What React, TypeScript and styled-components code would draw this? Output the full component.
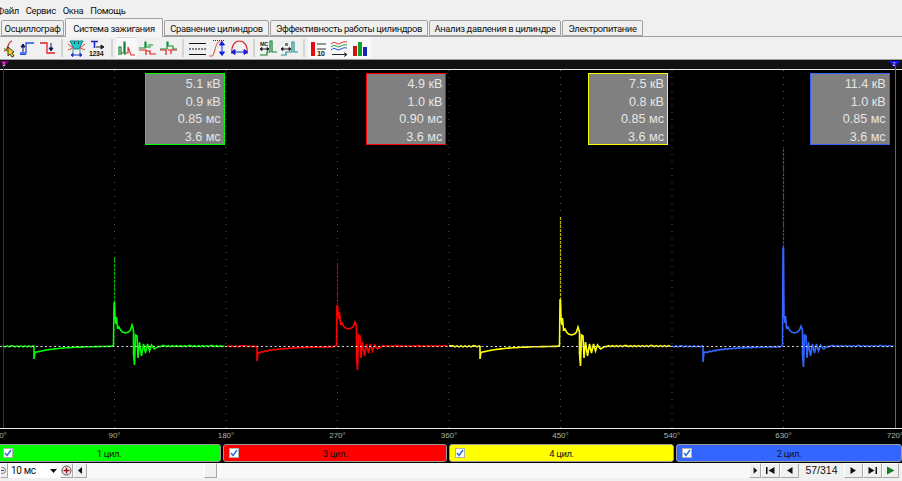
import React from 'react';
import styled, { createGlobalStyle } from 'styled-components';

const GlobalStyle = createGlobalStyle`
  html, body {
    margin: 0;
    padding: 0;
    background: #f0f0f0;
    overflow: hidden;
  }
  * {
    box-sizing: border-box;
  }
`;

const Page = styled.div`
  width: 902px;
  height: 481px;
  display: flex;
  flex-direction: column;
  overflow: hidden;
  background: #f0f0f0;
  color: #111;
  font: 9.4px Roboto, 'Liberation Sans', Arial, sans-serif;
  letter-spacing: -0.35px;
`;

const MenuBar = styled.div`
  height: 18px;
  display: flex;
  align-items: center;
  gap: 7px;
  margin-left: -3px;
  padding-top: 2px;
`;

const TabStrip = styled.div`
  height: 19px;
  display: flex;
  align-items: flex-end;
  padding-left: 1px;
  border-bottom: 1px solid #a0a0a0;
`;

const Tab = styled.div<{ $w: number; $active?: boolean }>`
  width: ${props => props.$w}px;
  height: ${props => (props.$active ? 19 : 16)}px;
  margin-bottom: ${props => (props.$active ? -1 : 0)}px;
  margin-right: 1px;
  display: flex;
  align-items: center;
  justify-content: center;
  border: 1px solid #a0a0a0;
  border-bottom: ${props => (props.$active ? 'none' : '1px solid #a0a0a0')};
  border-radius: 2px 2px 0 0;
  background: ${props => (props.$active ? '#f5f5f5' : '#f0f0f0')};
  white-space: nowrap;
  position: relative;
`;

const Toolbar = styled.div`
  height: 23px;
  display: flex;
  align-items: center;
  margin-left: -5px;
  border-bottom: 1px solid #a0a0a0;
  padding-bottom: 1px;
`;

const ToolButton = styled.div<{ $active?: boolean; $hot?: boolean }>`
  width: 21px;
  height: 21px;
  display: flex;
  align-items: center;
  justify-content: center;
  background: ${props => (props.$active || props.$hot ? '#f9f9f9' : 'transparent')};
  border-top: 1px solid ${props => (props.$active ? '#d8d8d8' : 'transparent')};
`;

const ToolSep = styled.div`
  width: 8px;
  height: 18px;
  display: flex;
  justify-content: center;
  &::before {
    content: '';
    width: 2px;
    background: #d4d4d4;
  }
`;

const Scope = styled.div`
  background: #000;
  display: flex;
  flex-direction: column;
`;

const Plot = styled.div`
  height: 369px;
  position: relative;
`;

const PlotSvg = styled.svg`
  display: block;
`;

const CardLayer = styled.div`
  position: absolute;
  left: 3px;
  top: 13px;
  display: flex;
`;

const CardCell = styled.div`
  width: 221.67px;
  display: flex;
  justify-content: flex-end;
`;

const Card = styled.div<{ $color: string }>`
  width: 80px;
  height: 72px;
  padding: 2px 3px 0 0;
  background: #808080;
  border: 1px solid ${props => props.$color};
  color: #e6e6e6;
  font: 12.6px/17.6px 'Liberation Sans', Arial, sans-serif;
  letter-spacing: normal;
  text-align: right;
`;

const DegreeRow = styled.div`
  height: 14px;
  display: grid;
  grid-template-columns: repeat(9, 111.5px);
  margin-left: -52.75px;
  color: #aab8a8;
  font: 8px/14px 'Liberation Sans', Arial, sans-serif;
  letter-spacing: normal;
  text-align: center;
`;

const CylinderRow = styled.div`
  height: 20px;
  display: flex;
  gap: 2px;
  margin-left: -3px;
  padding: 1px 0;
`;

const Cylinder = styled.div<{ $color: string; $w: number }>`
  width: ${props => props.$w}px;
  height: 18px;
  display: flex;
  align-items: center;
  position: relative;
  justify-content: center;
  background: ${props => props.$color};
  border: 1px solid #9a9a9a;
  border-radius: 3px;
  color: #141414;
`;

const CheckBox = styled.div`
  position: absolute;
  left: 5px;
  top: 3px;
  width: 10px;
  height: 10px;
  display: flex;
  align-items: center;
  justify-content: center;
  background: #fff;
  border: 1px solid #b0b0b0;
`;

const BottomBar = styled.div`
  height: 18px;
  display: flex;
  align-items: flex-start;
  background: #f0f0f0;
`;

const RoundButton = styled.div<{ $w: number }>`
  width: ${props => props.$w}px;
  height: 15px;
  display: flex;
  align-items: center;
  justify-content: center;
  background: #f0f0f0;
  border: 1px solid #a8a8a8;
  border-left-color: #fff;
  border-top-color: #fff;
`;

const RateSelect = styled.div`
  width: 52px;
  height: 15px;
  padding: 0 3px;
  display: flex;
  align-items: center;
  justify-content: space-between;
  background: #fff;
  font-size: 10px;
`;

const Track = styled.div`
  width: 662px;
  height: 15px;
  padding-left: 117px;
  background: #f8f8f8;
`;

const Thumb = styled.div`
  width: 13px;
  height: 15px;
  background: #f0f0f0;
  border: 1px solid #a8a8a8;
  border-left-color: #fff;
  border-top-color: #fff;
`;

const Counter = styled.div`
  width: 45px;
  height: 15px;
  text-align: center;
  background: #f0f0f0;
  font: 10.5px/15px 'Liberation Sans', Arial, sans-serif;
  letter-spacing: normal;
`;

const CYLINDERS = [
  { color: '#00ff00', name: '1 цил.', w: 224, top: 257, bright: 303, p0: 316, p1: 333, bump: 325, dip: 359, min: 365 },
  { color: '#ff0000', name: '3 цил.', w: 224, top: 262, bright: 306, p0: 311, p1: 329, bump: 322, dip: 361, min: 370 },
  { color: '#ffff00', name: '4 цил.', w: 225, top: 217, bright: 300, p0: 317, p1: 335, bump: 327, dip: 359, min: 366 },
  { color: '#3366ff', name: '2 цил.', w: 226, top: 149, bright: 248, p0: 315, p1: 333, bump: 326, dip: 362, min: 367 },
];

const READOUTS = [
  ['5.1 кВ', '0.9 кВ', '0.85 мс', '3.6 мс'],
  ['4.9 кВ', '1.0 кВ', '0.90 мс', '3.6 мс'],
  ['7.5 кВ', '0.8 кВ', '0.85 мс', '3.6 мс'],
  ['11.4 кВ', '1.0 кВ', '0.85 мс', '3.6 мс'],
];

const DEGREES = ['0°', '90°', '180°', '270°', '360°', '450°', '540°', '630°', '720°'];

function tracePath(i: number) {
  const c = CYLINDERS[i];
  const s = 114.5 + 223 * i;
  const pts: [number, number][] = [];
  const wobble = (x: number) => 346 + (Math.sin(x * 1.7) > 0.2 ? 0.6 : -0.4);
  for (let x = s - 111.5; x < s - 80.5; x += 2) pts.push([x, wobble(x) + 0.3]);
  pts.push([s - 80.5, 346.5], [s - 80.5, c.dip], [s - 79.5, 352.5]);
  for (let x = s - 78; x < s - 3; x += 2) {
    const decay = 6.5 * Math.exp(-(x - (s - 80)) / 24);
    pts.push([x, 346.4 + decay + (Math.round(x) % 4 === 0 ? 0.5 : -0.3)]);
  }
  pts.push([s - 1, 345.6], [s - 0.5, c.bright], [s, c.bright], [s + 0.5, c.p0], [s + 1.5, c.p0 + 8], [s + 2, c.p0 + 1]);
  pts.push([s + 3, c.p1 - 5], [s + 4.5, c.p1 - 6], [s + 6, c.p1 - 3], [s + 8, c.p1 - 1], [s + 11, c.p1], [s + 14, c.p1 - 1]);
  pts.push([s + 16, c.p1 - 3], [s + 17.5, c.bump], [s + 19, c.p1 - 3], [s + 19, c.min - 12], [s + 20, c.min]);
  pts.push([s + 21, 335], [s + 22.5, 336], [s + 23.5, 358], [s + 25, 342], [s + 27, 356], [s + 29, 344]);
  pts.push([s + 31, 353], [s + 33, 344], [s + 35, 351], [s + 37, 345], [s + 40, 349], [s + 44, 346.5]);
  for (let x = s + 46; x <= s + 111.5 && x < 895; x += 2) pts.push([x, wobble(x)]);
  return pts.map((p, k) => `${k ? 'L' : 'M'}${p[0].toFixed(1)} ${p[1].toFixed(1)}`).join(' ');
}

function PlotDrawing() {
  const grid = [1, 2, 3, 4, 5, 6, 7];
  return (
    <PlotSvg width={902} height={369} viewBox="0 60 902 369">
      <rect x={0} y={60} width={902} height={9} fill="#111" />
      {grid.map(g => (
        <line key={g} x1={3 + 111.5 * g} x2={3 + 111.5 * g} y1={70} y2={428} stroke="#555" strokeDasharray="1 6" />
      ))}
      <line x1={0} x2={902} y1={69.5} y2={69.5} stroke="#e8e8e8" />
      <line x1={0} x2={902} y1={428.5} y2={428.5} stroke="#e8e8e8" />
      <line x1={3.5} x2={3.5} y1={62} y2={428} stroke="#800080" />
      <line x1={895.5} x2={895.5} y1={62} y2={428} stroke="#3366ff" />
      {CYLINDERS.map((c, i) => (
        <g key={c.name}>
          <path
            d={`M${114.5 + 223 * i} ${c.bright} V${c.top}`}
            stroke={c.color}
            strokeOpacity={0.7}
            strokeWidth={1.2}
            strokeDasharray="3 1"
            fill="none"
          />
          <path d={tracePath(i)} stroke={c.color} strokeWidth={1.6} fill="none" />
        </g>
      ))}
      <line x1={0} x2={895} y1={346.5} y2={346.5} stroke="#d8d8d8" strokeDasharray="2 2.5" />
      <polygon points="0,61 9,61 4,67" fill="#800080" />
      <polygon points="888,61 900,61 895,67" fill="#1010f0" />
      <text x={2.5} y={65.5} fontSize={5} fill="#fff" fontFamily="Liberation Sans">1</text>
      <text x={892.5} y={65.5} fontSize={5} fill="#fff" fontFamily="Liberation Sans">2</text>
    </PlotSvg>
  );
}

const Icon = ({ children }: { children: React.ReactNode }) => (
  <svg width={19} height={19} viewBox="0 0 19 19" fill="none">
    {children}
  </svg>
);

const TOOL_GROUPS: { active?: boolean; hot?: boolean; art: React.ReactNode }[][] = [
  [
    {
      art: (
        <>
          <path d="M8 12 Q11 11 12 7 T16 2" stroke="#d03030" strokeWidth={1.2} />
          <path d="M8 9 Q11 13 13 12" stroke="#30a030" />
          <path d="M12 8 L12 17 L14 15 L16 18 L18 17 L16 14 L18 13 Z" fill="#f4d020" stroke="#111" strokeWidth={0.8} />
        </>
      ),
    },
    {
      art: (
        <>
          <path d="M3 14 H9 V4 H17" stroke="#2050e0" strokeWidth={1.3} />
          <path d="M6 13 V6 M4 8 L6 5 L8 8 Z" stroke="#101060" fill="#101060" />
          <path d="M3 15.5 H9" stroke="#2050e0" />
        </>
      ),
    },
    {
      art: (
        <>
          <path d="M2 4 H9 V14 H17" stroke="#e02020" strokeWidth={1.3} />
          <path d="M13 4 V11 M11 9 L13 12 L15 9 Z" stroke="#101060" fill="#101060" />
        </>
      ),
    },
  ],
  [
    {
      art: (
        <>
          <path d="M3 2 H16 L12 10 H7 Z" fill="#20c8c8" stroke="#108080" />
          <path d="M1 5 L6 9 M18 5 L13 9 M1 11 L6 9 M18 11 L13 9" stroke="#e04040" />
          <path d="M7 4 H8 M11 4 H12" stroke="#111" strokeWidth={1.4} />
          <path d="M6 10 V16 M13 10 V16" stroke="#20a0a0" />
          <path d="M4 16 H15 M4 16 L6 14.5 V17.5 Z M15 16 L13 14.5 V17.5 Z" stroke="#2030d0" fill="#2030d0" />
        </>
      ),
    },
    {
      art: (
        <>
          <path d="M3 2.5 H10 M6.5 2.5 V9" stroke="#1828c8" strokeWidth={1.6} />
          <path d="M8 8 H15 M13 6 L16 8 L13 10 Z" stroke="#222" fill="#222" />
          <text x={1} y={17} fontSize={7} fontWeight={700} fill="#222" fontFamily="Liberation Sans">1234</text>
        </>
      ),
    },
  ],
  [
    {
      active: true,
      art: (
        <>
          <path d="M2 16 V8 H4 V16 M4 14 H7 V3 H8 V16" stroke="#108030" strokeWidth={1.2} />
          <path d="M8 14 H11 V8 L14 16 H18" stroke="#e03030" strokeWidth={1.1} />
        </>
      ),
    },
    {
      art: (
        <>
          <path d="M1 9 H7 V3 H8 V8 H13 M10 6 H15" stroke="#109030" strokeWidth={1.2} />
          <path d="M1 11 H8 V16 M8 12 H12 V15 H18" stroke="#e02020" strokeWidth={1.2} />
        </>
      ),
    },
    {
      art: (
        <>
          <path d="M1 10 H8 V3 H9 V7 H14 V10 H18" stroke="#109030" strokeWidth={1.2} />
          <path d="M1 11 H7 V16 M9 11 H12 V15 M12 11 H18" stroke="#e02020" strokeWidth={1.2} />
        </>
      ),
    },
  ],
  [
    {
      art: (
        <>
          <path d="M1 4.5 H18 M1 15.5 H18" stroke="#111" strokeWidth={1.1} />
          <path d="M1 10 H18" stroke="#111" strokeDasharray="2 1" />
        </>
      ),
    },
    {
      art: (
        <>
          <path d="M0 17 H3 C6 17 6 3 10 3 H14" stroke="#e06060" strokeWidth={1.1} />
          <path d="M4 1.5 H16" stroke="#333" strokeDasharray="1 1" />
          <path d="M13 4 V15 M10.5 6 L13 2.5 L15.5 6 Z M10.5 13 L13 16.5 L15.5 13 Z" stroke="#1020e0" fill="#1020e0" />
        </>
      ),
    },
    {
      art: (
        <>
          <path d="M2 15 C1 6 5 2 9.5 2 S18 6 17 15" stroke="#e02020" strokeWidth={1.2} />
          <path d="M2 13 H17 M5 10.5 L1.5 13 L5 15.5 Z M14 10.5 L17.5 13 L14 15.5 Z" stroke="#1020e0" fill="#1020e0" />
        </>
      ),
    },
  ],
  [
    {
      art: (
        <>
          <path d="M1 16 H8 V13 H11 V2 H13 V13 H18" stroke="#108030" strokeWidth={1.2} />
          <text x={1} y={7} fontSize={5.5} fontWeight={700} fill="#222" fontFamily="Liberation Sans">MC</text>
          <path d="M1 10 H10 M1 10 L3 8.5 V11.5 Z M10 10 L8 8.5 V11.5 Z" stroke="#222" fill="#222" />
        </>
      ),
    },
    {
      art: (
        <>
          <path d="M1 16 H6 V13 H12 V3 H14 V13 H18" stroke="#209090" strokeWidth={1.2} />
          <text x={5} y={7} fontSize={6} fontWeight={700} fill="#222" fontFamily="Liberation Sans">к</text>
          <path d="M1 10 H11 M1 10 L3 8.5 V11.5 Z M11 10 L9 8.5 V11.5 Z" stroke="#222" fill="#222" />
        </>
      ),
    },
  ],
  [
    {
      hot: true,
      art: (
        <>
          <rect x={2} y={3} width={4} height={14} fill="#e01010" />
          <path d="M8 5 H17 M8 10 H17" stroke="#333" strokeWidth={1.1} />
          <text x={8} y={17} fontSize={7.5} fontWeight={700} fill="#222" fontFamily="Liberation Sans">10</text>
        </>
      ),
    },
    {
      hot: true,
      art: (
        <>
          <path d="M1 5 Q4 2 6 4 T11 4 T17 3" stroke="#e03030" />
          <path d="M1 8 Q4 5 6 7 T11 7 T17 6" stroke="#20a040" />
          <path d="M1 11 Q4 8 6 10 T11 10 T17 9" stroke="#2050e0" />
          <path d="M2 15.5 H16 M14 13.5 L17 15.5 L14 17.5" stroke="#222" />
        </>
      ),
    },
    {
      hot: true,
      art: (
        <>
          <rect x={2} y={7} width={4} height={10} fill="#d81010" />
          <rect x={7} y={3} width={4} height={14} fill="#10a030" />
          <rect x={12} y={8} width={4} height={9} fill="#1828b0" />
        </>
      ),
    },
  ],
];

const Glyph = ({ d, fill = '#111' }: { d: string; fill?: string }) => (
  <svg width={11} height={11} viewBox="0 0 11 11">
    <path d={d} fill={fill} />
  </svg>
);

export default function App(): JSX.Element {
  return (
    <Page>
      <GlobalStyle />
      <MenuBar>
        <span>Файл</span>
        <span>Сервис</span>
        <span>Окна</span>
        <span>Помощь</span>
      </MenuBar>
      <TabStrip>
        <Tab $w={63}>Осциллограф</Tab>
        <Tab $w={98} $active>Система зажигания</Tab>
        <Tab $w={105}>Сравнение цилиндров</Tab>
        <Tab $w={158}>Эффективность работы цилиндров</Tab>
        <Tab $w={132}>Анализ давления в цилиндре</Tab>
        <Tab $w={81}>Электропитание</Tab>
      </TabStrip>
      <Toolbar>
        {TOOL_GROUPS.map((group, g) => (
          <React.Fragment key={g}>
            {g > 0 && <ToolSep />}
            {group.map((tool, t) => (
              <ToolButton key={t} $active={tool.active} $hot={tool.hot}>
                <Icon>{tool.art}</Icon>
              </ToolButton>
            ))}
          </React.Fragment>
        ))}
      </Toolbar>
      <Scope>
        <Plot>
          <PlotDrawing />
          <CardLayer>
            {READOUTS.map((rows, i) => (
              <CardCell key={i}>
                <Card $color={CYLINDERS[i].color}>
                  {rows.map(row => (
                    <div key={row}>{row}</div>
                  ))}
                </Card>
              </CardCell>
            ))}
          </CardLayer>
        </Plot>
        <DegreeRow>
          {DEGREES.map(d => (
            <span key={d}>{d}</span>
          ))}
        </DegreeRow>
        <CylinderRow>
          {CYLINDERS.map(c => (
            <Cylinder key={c.name} $color={c.color} $w={c.w}>
              <CheckBox>
                <svg width={8} height={8} viewBox="0 0 8 8" fill="none">
                  <path d="M1 4 L3 6.5 L7 1" stroke="#2a6fe0" strokeWidth={1.5} />
                </svg>
              </CheckBox>
              {c.name}
            </Cylinder>
          ))}
        </CylinderRow>
      </Scope>
      <BottomBar>
        <RoundButton $w={8}>
          <svg width={8} height={11} viewBox="0 0 8 11">
            <circle cx={2} cy={5.5} r={4} fill="#eee" stroke="#555" />
            <path d="M0 5.5 H4" stroke="#2030b0" strokeWidth={1.2} />
          </svg>
        </RoundButton>
        <RateSelect>
          10 мс
          <svg width={7} height={4} viewBox="0 0 7 4">
            <path d="M0 0 H7 L3.5 4 Z" fill="#111" />
          </svg>
        </RateSelect>
        <RoundButton $w={13}>
          <svg width={11} height={11} viewBox="0 0 11 11">
            <circle cx={5.5} cy={5.5} r={4.5} fill="#eee" stroke="#555" />
            <path d="M2.5 5.5 H8.5 M5.5 2.5 V8.5" stroke="#a01010" strokeWidth={1.4} />
          </svg>
        </RoundButton>
        <RoundButton $w={14}>
          <Glyph d="M7 2 V9 L3 5.5 Z" />
        </RoundButton>
        <Track>
          <Thumb />
        </Track>
        <RoundButton $w={12}>
          <Glyph d="M4 2 V9 L8 5.5 Z" />
        </RoundButton>
        <RoundButton $w={19}>
          <Glyph d="M1 2 H2.5 V9 H1 Z M9.5 2 V9 L3.5 5.5 Z" />
        </RoundButton>
        <RoundButton $w={19}>
          <Glyph d="M8.5 2 V9 L3 5.5 Z" />
        </RoundButton>
        <Counter>57/314</Counter>
        <RoundButton $w={19}>
          <Glyph d="M2.5 2 V9 L8 5.5 Z" />
        </RoundButton>
        <RoundButton $w={19}>
          <Glyph d="M1.5 2 V9 L7.5 5.5 Z M8.5 2 H10 V9 H8.5 Z" />
        </RoundButton>
        <RoundButton $w={17}>
          <Glyph d="M2 1.5 V9.5 L9.5 5.5 Z" fill="#108020" />
        </RoundButton>
      </BottomBar>
    </Page>
  );
}
